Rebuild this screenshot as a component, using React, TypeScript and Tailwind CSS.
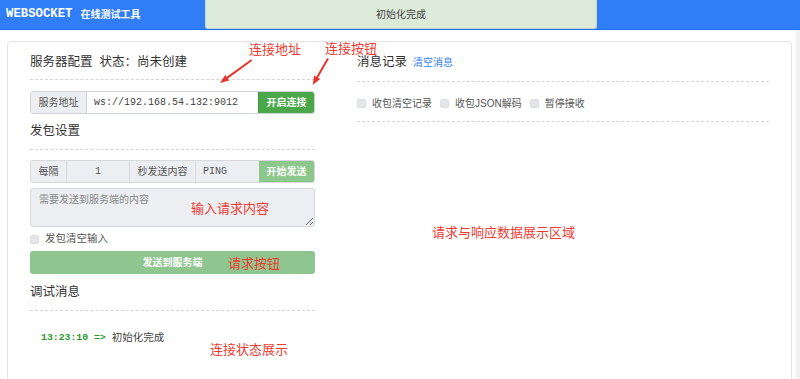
import React from "react";

const Check = ({ label }: { label: string }) => (
  <span className="flex items-center gap-[6px]">
    <span className="w-[9px] h-[9px] rounded-[2px] bg-[#e4e6ea] border border-[#dcdee2]" />
    <span>{label}</span>
  </span>
);

const Dash = () => <div className="border-t border-dashed border-[#d4d4d4]" />;

export default function App() {
  return (
    <div className="relative w-[800px] h-[379px] overflow-hidden bg-white font-['Liberation_Sans','Noto_Sans_CJK_SC',sans-serif] text-[#333]">
      <header className="relative h-[30px] bg-[#2f7ef5] border-b border-[#1f6ff0] flex items-center pl-[6px] text-white font-bold">
        <span className="font-['Liberation_Mono',monospace] text-[12.3px]">WEBSOCKET</span>
        <span className="ml-[8px] text-[10px]">在线测试工具</span>
        <div className="absolute left-[205px] top-0 w-[392px] h-[29px] bg-[#dcebd9] border border-t-0 border-[#c5d4bf] rounded-b-[3px] flex items-center justify-center text-[10px] font-normal text-[#444]">
          初始化完成
        </div>
      </header>

      <div className="flex">
        <div className="mt-[11px] ml-[7px] mr-[4px] flex-1 h-[400px] border border-[#e4e4e4] rounded-[4px] pt-[10px] pl-[22px] pr-[22px] flex gap-[42px]">
          {/* Left column */}
          <div className="w-[285px] flex flex-col">
            <div className="h-[20px] flex items-center text-[12.5px]">
              服务器配置&nbsp;&nbsp;状态：尚未创建
            </div>
            <div className="mt-[7px]"><Dash /></div>
            <div className="mt-[11px] h-[23px] flex border border-[#cfd2d6] rounded-[3px] overflow-hidden text-[10px]">
              <div className="w-[56px] bg-[#eceef1] border-r border-[#cfd2d6] flex items-center justify-center text-[#555]">服务地址</div>
              <div className="flex-1 flex items-center pl-[7px] font-['Liberation_Mono',monospace] text-[#444]">ws://192.168.54.132:9012</div>
              <div className="w-[56px] bg-[#4aa84a] border-l border-[#3f9a3f] flex items-center justify-center text-white font-bold">开启连接</div>
            </div>

            <div className="mt-[7px] h-[20px] flex items-center text-[12.5px]">发包设置</div>
            <div className="mt-[8px]"><Dash /></div>
            <div className="mt-[10px] h-[23px] flex border border-[#d6d8dc] rounded-[3px] overflow-hidden text-[10px] text-[#555] bg-[#eceef1]">
              <div className="w-[36px] border-r border-[#d6d8dc] flex items-center justify-center">每隔</div>
              <div className="w-[63px] border-r border-[#d6d8dc] flex items-center justify-center font-['Liberation_Mono',monospace]">1</div>
              <div className="w-[66px] border-r border-[#d6d8dc] flex items-center justify-center">秒发送内容</div>
              <div className="w-[63px] flex items-center pl-[7px] font-['Liberation_Mono',monospace]">PING</div>
              <div className="flex-1 bg-[#8cc78b] flex items-center justify-center text-white font-bold">开始发送</div>
            </div>
            <textarea
              disabled
              placeholder="需要发送到服务端的内容"
              className="mt-[5px] h-[39px] w-full bg-[#eceef1] border border-[#d6d8dc] rounded-[3px] px-[8px] py-[4px] text-[10px] leading-[14px] placeholder:text-[#8a8a8a] resize-y"
            />
            <div className="mt-[5px] h-[14px] flex items-center text-[10.5px] text-[#555]">
              <Check label="发包清空输入" />
            </div>
            <div className="mt-[5px] h-[23px] bg-[#8fc68f] rounded-[3px] flex items-center justify-center text-white text-[10px] font-bold">
              发送到服务端
            </div>
            <div className="mt-[8px] h-[20px] flex items-center text-[12.5px]">调试消息</div>
            <div className="mt-[8px]"><Dash /></div>
            <div className="mt-[20px] h-[14px] flex items-center pl-[11px] text-[10.5px]">
              <span className="font-['Liberation_Mono',monospace] font-bold text-[#2a9a2a] text-[9.8px]">13:23:10 =&gt;</span>
              <span className="ml-[6px] text-[#444]">初始化完成</span>
            </div>
          </div>

          {/* Right column */}
          <div className="flex-1 flex flex-col">
            <div className="h-[20px] flex items-center">
              <span className="text-[12.5px]">消息记录</span>
              <span className="ml-[6px] text-[10px] text-[#2f7ef5]">清空消息</span>
            </div>
            <div className="mt-[9px]"><Dash /></div>
            <div className="mt-[14px] h-[14px] flex items-center gap-[8px] text-[10px] text-[#555]">
              <Check label="收包清空记录" />
              <Check label="收包JSON解码" />
              <Check label="暂停接收" />
            </div>
            <div className="mt-[11px]"><Dash /></div>
          </div>
        </div>
        <div className="w-[4px] bg-[#f2f2f2]" />
      </div>

      {/* Annotations */}
      <svg className="absolute inset-0 pointer-events-none" width="800" height="379">
        <line x1="251.7" y1="60" x2="226" y2="78.6" stroke="#e8342b" strokeWidth="2" />
        <polygon points="220,83 229.3,80.5 225.2,74.9" fill="#e8342b" />
        <line x1="328" y1="58.5" x2="316.5" y2="78.5" stroke="#e8342b" strokeWidth="2" />
        <polygon points="312.7,85 320.2,78.9 314.1,75.4" fill="#e8342b" />
      </svg>
      <div className="absolute inset-0 pointer-events-none text-[#ee3b32] text-[13px] leading-[13px]">
        <span className="absolute left-[249px] top-[43px]">连接地址</span>
        <span className="absolute left-[325px] top-[42px]">连接按钮</span>
        <span className="absolute left-[191px] top-[202px]">输入请求内容</span>
        <span className="absolute left-[228px] top-[257px]">请求按钮</span>
        <span className="absolute left-[210px] top-[343px]">连接状态展示</span>
        <span className="absolute left-[432px] top-[226px]">请求与响应数据展示区域</span>
      </div>
    </div>
  );
}
